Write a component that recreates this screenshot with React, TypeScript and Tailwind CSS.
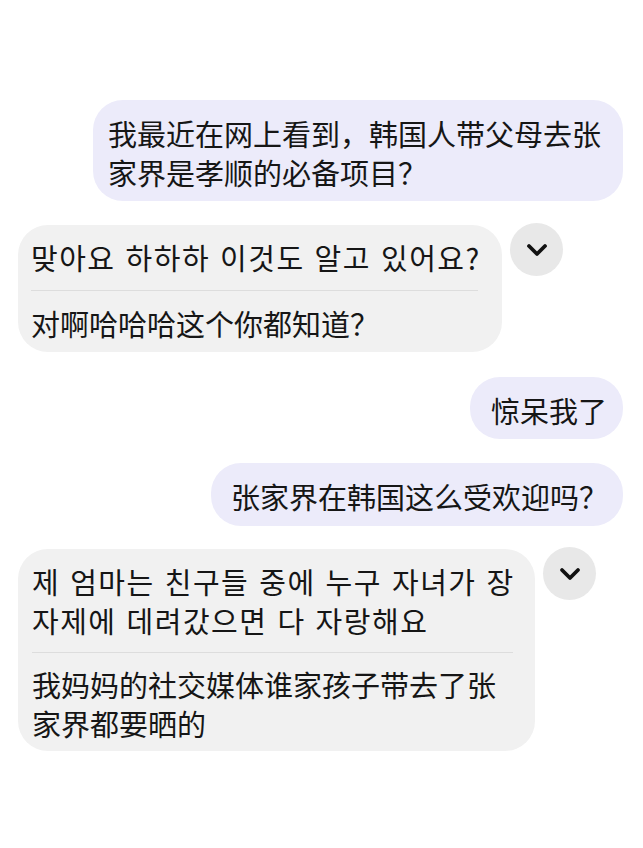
import React from "react";

const Chevron = () => (
  <div className="ml-[8px] -mt-[2px] w-[53px] h-[53px] rounded-full bg-[#e8e8e8] flex items-center justify-center shrink-0">
    <svg width="22" height="14" viewBox="0 0 22 14" fill="none">
      <polyline points="3,3 11,11 19,3" stroke="#111" strokeWidth="3.8" strokeLinecap="round" strokeLinejoin="round" />
    </svg>
  </div>
);

const KR = "font-['Noto_Sans_CJK_KR','Noto_Sans_CJK_SC',sans-serif] text-[29px] tracking-[1.5px] [word-spacing:2px]";

export default function App() {
  return (
    <div className="w-[643px] h-[848px] bg-white pt-[100px] flex flex-col text-[29px] leading-[39px] text-[#161616] font-['Noto_Sans_CJK_SC','Noto_Sans_CJK_KR',sans-serif]">
      {/* sent 1 */}
      <div className="flex justify-end pr-[20px]">
        <div className="w-[530px] rounded-[30px] bg-[#ecebfa] pl-[15px] pt-[14px] pb-[9px] whitespace-nowrap">
          <span className="block">我最近在网上看到，韩国人带父母去张</span>
          <span className="block">家界是孝顺的必备项目？</span>
        </div>
      </div>

      {/* received 1 */}
      <div className="flex items-start pl-[18px] mt-[24px]">
        <div className="w-[484px] rounded-[30px] bg-[#f1f1f1] pt-[13px] pb-[9px] whitespace-nowrap">
          <span className={"block pl-[13px] " + KR}>맞아요 하하하 이것도 알고 있어요?</span>
          <div className="h-px bg-[#dddddd] ml-[13px] mr-[24px] mt-[13px] mb-[13px]" />
          <span className="block pl-[13px]">对啊哈哈哈这个你都知道？</span>
        </div>
        <Chevron />
      </div>

      {/* sent 2 */}
      <div className="flex justify-end pr-[20px] mt-[25px]">
        <div className="w-[153px] rounded-[30px] bg-[#ecebfa] pl-[21px] pt-[14px] pb-[9px] whitespace-nowrap">
          <span className="block">惊呆我了</span>
        </div>
      </div>

      {/* sent 3 */}
      <div className="flex justify-end pr-[20px] mt-[24px]">
        <div className="w-[412px] rounded-[30px] bg-[#ecebfa] pl-[20px] pt-[14px] pb-[10px] whitespace-nowrap">
          <span className="block">张家界在韩国这么受欢迎吗？</span>
        </div>
      </div>

      {/* received 2 */}
      <div className="flex items-start pl-[18px] mt-[23px]">
        <div className="w-[517px] rounded-[30px] bg-[#f1f1f1] pt-[13px] pb-[8px] whitespace-nowrap">
          <div className={"pl-[14px] " + KR}>
            <span className="block">제 엄마는 친구들 중에 누구 자녀가 장</span>
            <span className="block">자제에 데려갔으면 다 자랑해요</span>
          </div>
          <div className="h-px bg-[#dddddd] ml-[14px] mr-[22px] mt-[12px] mb-[12px]" />
          <div className="pl-[14px]">
            <span className="block">我妈妈的社交媒体谁家孩子带去了张</span>
            <span className="block">家界都要晒的</span>
          </div>
        </div>
        <Chevron />
      </div>
    </div>
  );
}
